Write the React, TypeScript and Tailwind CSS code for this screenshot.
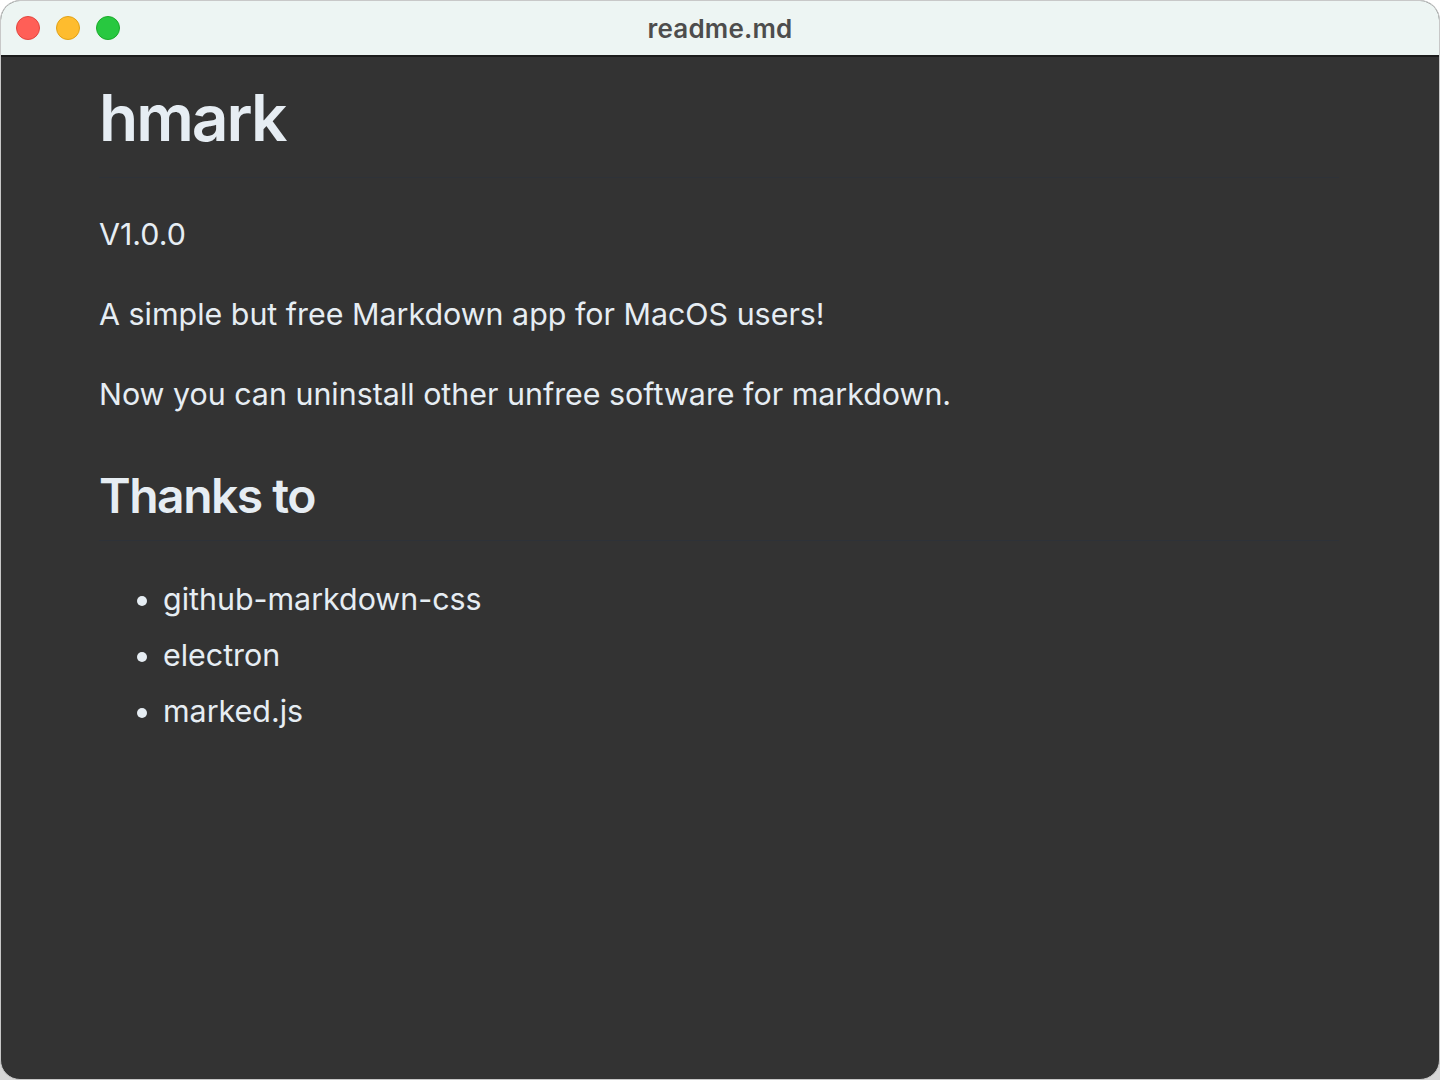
const items = ['github-markdown-css', 'electron', 'marked.js']

function TrafficLights() {
  return (
    <div className="absolute left-[15px] top-[15px] flex gap-[16px]">
      <span className="w-[24px] h-[24px] rounded-full bg-[#ff5f57] border border-[#e2463f]" />
      <span className="w-[24px] h-[24px] rounded-full bg-[#febc2e] border border-[#e1a116]" />
      <span className="w-[24px] h-[24px] rounded-full bg-[#28c840] border border-[#1aab29]" />
    </div>
  )
}

export default function App() {
  return (
    <div className="w-[1440px] h-[1080px] bg-gradient-to-b from-white to-[#d6d6d6]" style={{ fontFamily: 'Inter, "Noto Sans", sans-serif' }}>
      <div className="w-full h-full rounded-[20px] overflow-hidden border border-[#c8c8c8] bg-[#333333] flex flex-col">
        <div className="relative h-[56px] shrink-0 bg-[#edf5f3] border-b-2 border-[#1c1c1c] flex items-center justify-center">
          <TrafficLights />
          <span className="text-[26px] font-semibold text-[#4d4d4d] tracking-[0.2px]">readme.md</span>
        </div>
        <div className="flex-1 pl-[98px] pr-[100px] pt-[21px] text-[#e6edf3] text-[30.4px] leading-[48px]">
          <h1 className="text-[64px] font-semibold tracking-[-2px] leading-[80px] pb-[19px] border-b border-[#2e3238] mb-[32px]">hmark</h1>
          <p className="mb-[32px]">V1.0.0</p>
          <p className="mb-[32px]">A simple but free Markdown app for MacOS users!</p>
          <p className="mb-[32px]">Now you can uninstall other unfree software for markdown.</p>
          <h2 className="mt-[48px] text-[48px] font-semibold tracking-[-1.5px] leading-[60px] pb-[14px] border-b border-[#2e3238] mb-[34px]">Thanks to</h2>
          <ul className="pl-[64px] list-disc flex flex-col gap-[8px]">
            {items.map((item) => (
              <li key={item}>{item}</li>
            ))}
          </ul>
        </div>
      </div>
    </div>
  )
}
